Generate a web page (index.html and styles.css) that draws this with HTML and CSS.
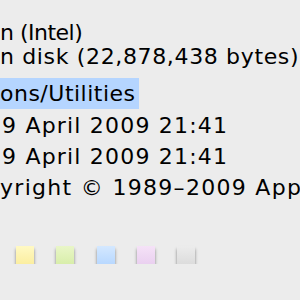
FILE: index.html
```html
<!DOCTYPE html>
<html lang="en">
<head>
  <meta charset="UTF-8" />
  <title>Info</title>
  <link rel="stylesheet" href="styles.css">
</head>
<body>
  <div class="info">
    <div class="row kind">n (Intel)</div>
    <div class="row size">n disk (22,878,438 bytes)</div>
    <div class="row where"><span class="selected">ons/Utilities</span></div>
    <div class="row created">9 April 2009 21:41</div>
    <div class="row modified">9 April 2009 21:41</div>
    <div class="row version">yright © 1989–2009 Apple Inc.</div>
  </div>

  <div class="labels">
    <span class="label yellow"></span>
    <span class="label green"></span>
    <span class="label blue"></span>
    <span class="label purple"></span>
    <span class="label gray"></span>
  </div>
</body>
</html>
```

FILE: styles.css
```css
body {
  margin: 0;
  background-color: #ececec;
  font-family: "DejaVu Sans", Verdana, sans-serif;
  color: #000;
  overflow: hidden;
}
.info {
  padding-top: 21px;
  font-size: 22px;
  white-space: nowrap;
  overflow: hidden;
}
.row {
  line-height: 24px;
}
.kind {
  letter-spacing: -0.5px;
}
.size {
  letter-spacing: 0.65px;
  margin-bottom: 9px;
}
.where {
  line-height: 31px;
  letter-spacing: 0.5px;
  margin-bottom: 5px;
}
.selected {
  display: inline-block;
  background-color: #b5d5ff;
  padding-right: 3px;
}
.created,
.modified {
  padding-left: 2px;
  letter-spacing: 1.2px;
  margin-bottom: 7px;
}
.version {
  letter-spacing: 1.3px;
}
.labels {
  display: flex;
  gap: 22.3px;
  margin-top: 46px;
  padding-left: 16px;
}
.label {
  width: 18px;
  height: 18px;
  box-shadow: 0 3px 3px rgba(0, 0, 0, 0.45);
}
.yellow { background: linear-gradient(#fff9c4, #fbeea0); }
.green { background: linear-gradient(#e9f6c8, #d8eeaa); }
.blue { background: linear-gradient(#d4e8ff, #b8d8ff); }
.purple { background: linear-gradient(#f5e2f7, #ead0f0); }
.gray { background: linear-gradient(#ececec, #dcdcdc); }
```
